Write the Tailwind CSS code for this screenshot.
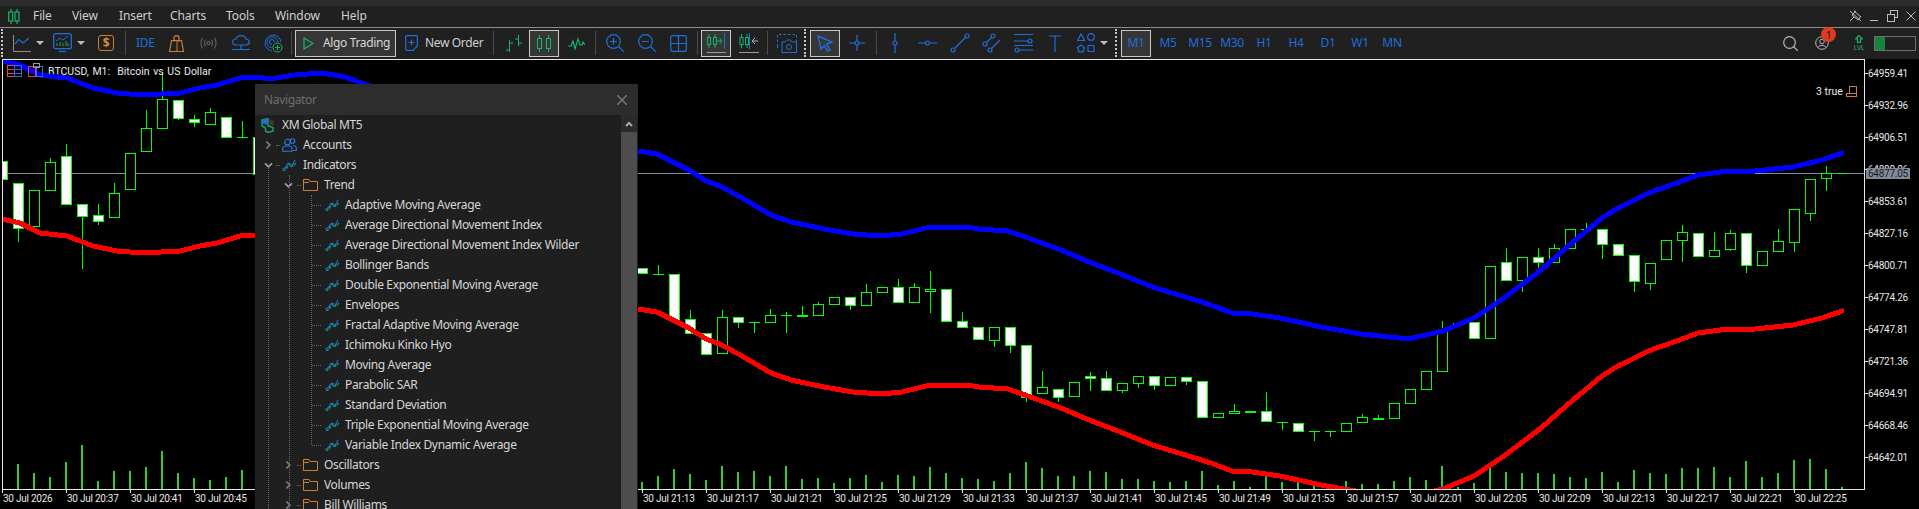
<!DOCTYPE html>
<html lang="en">
<head>
  <meta charset="UTF-8" />
  <title>XM Global MT5 - BTCUSD, M1</title>
  <script src="https://cdn.jsdelivr.net/npm/@tailwindcss/browser@4"></script>
</head>
<body class="bg-black h-[509px] overflow-hidden relative font-['Noto_Sans',sans-serif] text-[12px] leading-none tracking-[-0.35px]">
  <!-- shared icons -->
  <svg class="hidden">
    <symbol id="ind" viewBox="0 0 14 12">
      <path d="M0 10 Q3 10 5 6 T8 6 T13 1" fill="none" stroke="#1e6fd9" stroke-width="1.2" />
      <path d="M1 12 Q4 11 6 7 T9 6 T14 4" fill="none" stroke="#12a36a" stroke-width="1.2" stroke-dasharray="3 1" />
    </symbol>
    <symbol id="folder" viewBox="0 0 15 12">
      <path d="M.5 11.5V.5H6L7 2.5H14.5V11.5ZM.5 3.5H6" fill="none" stroke="#c98232" />
    </symbol>
    <symbol id="chev-right" viewBox="0 0 8 10">
      <path d="M1.5 1 5.5 5 1.5 9" fill="none" stroke="#7d7d7d" stroke-width="2" />
    </symbol>
    <symbol id="chev-down" viewBox="0 0 10 8">
      <path d="M1 1.5 5 5.5 9 1.5" fill="none" stroke="#a0a0a0" stroke-width="2" />
    </symbol>
  </svg>

  <!-- title strip -->
  <div class="h-[6px] bg-[#2b2b2b]"></div>

  <!-- menu bar -->
  <div class="h-[21px] bg-[#202020] flex items-center text-[#cfcfcf] relative tracking-[-0.1px] pb-px">
    <svg class="ml-[8px] w-[12px] h-[15px] flex-none" viewBox="0 0 12 15" fill="none" stroke="#12b76a" stroke-width="1.2">
      <path d="M3 0V15M9 0V15" /><rect x=".7" y="3" width="4" height="9" fill="#202020" /><rect x="7" y="3" width="4" height="9" fill="#202020" />
    </svg>
    <span class="ml-[13px] w-[39px] flex-none">File</span>
    <span class="w-[47px] flex-none">View</span>
    <span class="w-[51px] flex-none">Insert</span>
    <span class="w-[56px] flex-none">Charts</span>
    <span class="w-[49px] flex-none">Tools</span>
    <span class="w-[66px] flex-none">Window</span>
    <span class="flex-none">Help</span>
    <div class="ml-auto flex items-center pr-[3px]">
      <svg class="w-[13px] h-[12px]" viewBox="0 0 13 12" fill="none" stroke="#bdbdbd"><path d="M5 1 12 7M7 1 3 5 9 10 12 6M5 7 1 11M1 1 12 11" /></svg>
      <svg class="ml-[8px] w-[8px] h-[12px]" viewBox="0 0 8 12" fill="none" stroke="#bdbdbd"><path d="M0 10.5H8" /></svg>
      <svg class="ml-[9px] w-[11px] h-[12px]" viewBox="0 0 11 12" fill="none" stroke="#bdbdbd"><rect x="3.5" y=".5" width="7" height="7" /><rect x=".5" y="4.5" width="7" height="7" fill="#202020" /></svg>
      <svg class="ml-[8px] w-[10px] h-[12px]" viewBox="0 0 10 12" fill="none" stroke="#bdbdbd"><path d="M.5 1.5 9.5 10.5M9.5 1.5 .5 10.5" /></svg>
    </div>
  </div>
  <div class="h-px bg-[#8c8c8c]"></div>

  <!-- toolbar -->
  <div class="h-[31px] bg-[#202020] flex items-start pt-px">
    <div class="ml-[1px] w-[2px] h-[28px] flex-none border-l-2 border-dotted border-[#c8c8c8]"></div>
    <div class="h-[28px] flex items-center text-[#1e6fd9] flex-none">
      <svg class="ml-[10px] w-[18px] h-[18px] flex-none" viewBox="0 0 18 18" fill="none"><path d="M.5 1V17.5H18" stroke="#8e8e8e" /><path d="M2 10 6 5.5 10 9 16 4" stroke="#1e6fd9" stroke-width="1.2" /></svg>
      <div class="ml-[5px] w-0 h-0 border-x-[4px] border-x-transparent border-t-[4px] border-t-[#bdbdbd]"></div>
      <svg class="ml-[9px] w-[19px] h-[20px] flex-none" viewBox="0 0 19 20" fill="none"><rect x=".7" y=".7" width="17.6" height="15" rx="2" stroke="#1e6fd9" stroke-width="1.3" /><path d="M6 18.5H13" stroke="#1e6fd9" stroke-width="1.3" /><path d="M3 8 7 5 10 7 15 3" stroke="#1e6fd9" /><path d="M4 13V10M7 13V9M10 13V10M13 13V8M15 13V10" stroke="#12a36a" /></svg>
      <div class="ml-[5px] w-0 h-0 border-x-[4px] border-x-transparent border-t-[4px] border-t-[#bdbdbd]"></div>
      <div class="ml-[13px] w-[16px] h-[16px] flex-none rounded-[3px] border border-[#c98232] text-[#d98a30] font-bold text-[12px] flex items-center justify-center">$</div>
      <div class="ml-[11px] w-px h-[24px] flex-none bg-[#4a4a4a]"></div>
      <span class="ml-[10px] w-[18px] flex-none text-[12px]">IDE</span>
      <svg class="ml-[15px] w-[15px] h-[17px] flex-none" viewBox="0 0 15 17" fill="none" stroke="#c98232"><path d="M2.5 5.5H12.5L14.5 16.5H.5ZM5 7V3Q5 .7 7.5 .7T10 3V7" stroke-width="1.2" /><path d="M8 6V16" /></svg>
      <svg class="ml-[16px] w-[17px] h-[12px] flex-none" viewBox="0 0 17 12" fill="none" stroke="#5e5e5e" stroke-width="1.2"><circle cx="8.5" cy="6" r="1.6" /><path d="M5.5 2.5Q3.5 6 5.5 9.5M11.5 2.5Q13.5 6 11.5 9.5M2.5 .5Q-.5 6 2.5 11.5M14.5 .5Q17.5 6 14.5 11.5" /></svg>
      <svg class="ml-[15px] w-[18px] h-[16px] flex-none" viewBox="0 0 18 16" fill="none" stroke="#1e6fd9" stroke-width="1.2"><path d="M5 10H4Q.7 10 .7 7T4 4Q5 .7 9 .7T14 4Q17.3 4.500 17.3 7T14 10H5ZM9 10V14M0 14.500H18" /></svg>
      <svg class="ml-[14px] w-[19px] h-[19px] flex-none" viewBox="0 0 19 19" fill="none"><path d="M8 17A8 8 0 1 1 17 8M8 14A5.500 5.500 0 1 1 14 8M8 10.500A2.500 2.500 0 1 1 10.500 8" stroke="#1e6fd9" /><circle cx="13.500" cy="13.500" r="4.500" fill="#202020" stroke="#12b76a" /><path d="M13.500 11V16M11 13.500H16" stroke="#12b76a" /></svg>
      <div class="ml-[8px] w-px h-[24px] flex-none bg-[#4a4a4a]"></div>
      <div class="ml-[3px] w-[101px] h-[27px] flex-none flex items-center bg-[#363636] border border-[#c8c8c8] text-[#d8d8d8]">
        <svg class="ml-[7px] w-[11px] h-[13px] flex-none" viewBox="0 0 11 13" fill="none" stroke="#12b76a" stroke-width="1.2"><path d="M1 1V12L10 6.500Z" /></svg>
        <span class="ml-[9px]">Algo Trading</span>
      </div>
      <svg class="ml-[9px] w-[13px] h-[16px] flex-none" viewBox="0 0 13 16" fill="none" stroke="#1e6fd9" stroke-width="1.2"><path d="M1.500 .7H11.500Q12.300 .7 12.300 1.500V11L8 15.300H1.500Q.7 15.300 .7 14.500V1.500Q.7 .7 1.500 .7ZM6.500 4.500V10.500M3.500 7.500H9.500" /></svg>
      <span class="ml-[7px] w-[57px] flex-none whitespace-nowrap text-[#d0d0d0]">New Order</span>
      <div class="ml-[11px] w-px h-[24px] flex-none bg-[#4a4a4a]"></div>
      <svg class="ml-[10px] w-[19px] h-[17px] flex-none" viewBox="0 0 19 17" fill="none" stroke="#12b76a"><path d="M5.500 5V17M2 15H5.500M5.500 8H9M14.500 0V11M11 4H14.500M14.500 8H18" /></svg>
      <div class="ml-[6px] w-[30px] h-[27px] flex-none flex items-center justify-center bg-[#363636] border border-[#c8c8c8]">
        <svg class="w-[14px] h-[17px]" viewBox="0 0 14 17" fill="none" stroke="#12b76a"><path d="M2.500 0V17M11.500 0V17" /><rect x=".5" y="3.500" width="4" height="10" fill="#363636" /><rect x="9.500" y="3.500" width="4" height="10" fill="#363636" /></svg>
      </div>
      <svg class="ml-[9px] w-[17px] h-[13px] flex-none" viewBox="0 0 17 13" fill="none" stroke="#12b76a" stroke-width="1.2"><path d="M0 9H3L5 4 7 12 10 2 12 8H14L15 5 17 8" /></svg>
      <div class="ml-[10px] w-px h-[24px] flex-none bg-[#4a4a4a]"></div>
      <svg class="ml-[10px] w-[18px] h-[18px] flex-none" viewBox="0 0 18 18" fill="none" stroke="#1e6fd9" stroke-width="1.2"><circle cx="7.500" cy="7.500" r="6.800" /><path d="M12.500 12.500 18 18M4 7.500H11M7.500 4V11" /></svg>
      <svg class="ml-[14px] w-[18px] h-[18px] flex-none" viewBox="0 0 18 18" fill="none" stroke="#1e6fd9" stroke-width="1.2"><circle cx="7.500" cy="7.500" r="6.800" /><path d="M12.500 12.500 18 18M4 7.500H11" /></svg>
      <svg class="ml-[14px] w-[17px] h-[17px] flex-none" viewBox="0 0 17 17" fill="none" stroke="#1e6fd9" stroke-width="1.2"><rect x=".7" y=".7" width="15.600" height="15.600" rx="2" /><path d="M8.500 1V16M1 8.500H16" /></svg>
      <div class="ml-[10px] w-px h-[24px] flex-none bg-[#4a4a4a]"></div>
      <div class="ml-[3px] w-[30px] h-[27px] flex-none flex items-center justify-center bg-[#363636] border border-[#c8c8c8]">
        <svg class="w-[20px] h-[20px]" viewBox="0 0 20 20" fill="none"><path d="M3 1V15M9 1V15" stroke="#12b76a" /><rect x="1.500" y="4.500" width="3" height="7" fill="#363636" stroke="#12b76a" /><rect x="7.500" y="4.500" width="3" height="7" fill="#363636" stroke="#12b76a" /><path d="M11 8H16M13.500 5 16 8 13.500 11" stroke="#12b76a" /><path d="M18.500 0V16" stroke="#1e6fd9" /><path d="M1 19.500H20" stroke="#9a9a9a" /></svg>
      </div>
      <svg class="ml-[8px] w-[20px] h-[20px] flex-none" viewBox="0 0 20 20" fill="none"><path d="M2.500 1V15M8 1V15" stroke="#12b76a" /><rect x="1" y="4.500" width="3" height="7" fill="#202020" stroke="#12b76a" /><rect x="6.500" y="4.500" width="3" height="7" fill="#202020" stroke="#12b76a" /><path d="M10.500 0V16" stroke="#1e6fd9" /><path d="M19 8H13M16 5 13 8 16 11" stroke="#9fb7d8" /><path d="M0 19.500H20" stroke="#9a9a9a" /></svg>
      <div class="ml-[8px] w-px h-[24px] flex-none bg-[#4a4a4a]"></div>
      <svg class="ml-[9px] w-[20px] h-[19px] flex-none" viewBox="0 0 20 19" fill="none" stroke="#1e6fd9"><path d="M.5 8V.5H19.500V8" stroke-dasharray="2.500 2" /><path d="M5 18.500V8H8L10 6H13L15 8H19.500V18.500ZM.5 10V14" /><circle cx="12" cy="13" r="2.500" /></svg>
      <div class="ml-[7px] w-[2px] h-[28px] flex-none border-l-2 border-dotted border-[#c8c8c8]"></div>
      <div class="ml-[4px] w-[30px] h-[27px] flex-none flex items-center justify-center bg-[#363636] border border-[#c8c8c8]">
        <svg class="w-[16px] h-[17px]" viewBox="0 0 16 17" fill="none" stroke="#1e6fd9" stroke-width="1.400"><path d="M1 1 15 7 9.500 9 13 15 10.500 16 7.500 10.500 4 14Z" /></svg>
      </div>
      <svg class="ml-[9px] w-[16px] h-[16px] flex-none" viewBox="0 0 16 16" fill="none" stroke="#1e6fd9" stroke-width="1.200"><circle cx="8" cy="8" r="2" /><path d="M8 0V6M8 10V16M0 8H6M10 8H16" /></svg>
      <div class="ml-[11px] w-px h-[24px] flex-none bg-[#4a4a4a]"></div>
      <svg class="ml-[13px] w-[10px] h-[20px] flex-none" viewBox="0 0 10 20" fill="none" stroke="#1e6fd9" stroke-width="1.200"><circle cx="5" cy="10" r="2" /><path d="M5 0V8M5 12V20" /></svg>
      <svg class="ml-[18px] w-[19px] h-[10px] flex-none" viewBox="0 0 19 10" fill="none" stroke="#1e6fd9" stroke-width="1.200"><circle cx="9.500" cy="5" r="2" /><path d="M0 5H7.500M11.500 5H19" /></svg>
      <svg class="ml-[13px] w-[20px] h-[20px] flex-none" viewBox="0 0 20 20" fill="none" stroke="#1e6fd9" stroke-width="1.200"><circle cx="3" cy="17" r="2" /><circle cx="17" cy="3" r="2" /><path d="M4.500 15.500 15.500 4.500" /></svg>
      <svg class="ml-[12px] w-[19px] h-[20px] flex-none" viewBox="0 0 19 20" fill="none" stroke="#1e6fd9" stroke-width="1.200"><circle cx="3" cy="11" r="2" /><circle cx="11" cy="3" r="2" /><circle cx="8" cy="17" r="2" /><path d="M4.500 9.500 9.500 4.500M9.500 15.500 18 7" /></svg>
      <svg class="ml-[13px] w-[19px] h-[20px] flex-none" viewBox="0 0 19 20" fill="none" stroke="#1e6fd9" stroke-width="1.200"><circle cx="16" cy="8" r="2" /><circle cx="3" cy="17" r="2" /><path d="M0 1.500H19M0 8H14M0 12.500H19M5 17H19" /></svg>
      <svg class="ml-[16px] w-[12px] h-[17px] flex-none" viewBox="0 0 12 17" fill="none" stroke="#1e6fd9" stroke-width="1.200"><path d="M0 1H12M6 1V17" /></svg>
      <svg class="ml-[16px] w-[18px] h-[20px] flex-none" viewBox="0 0 18 20" fill="none" stroke="#1e6fd9" stroke-width="1.200"><path d="M4 1 7.500 7.500H.5Z" /><circle cx="14" cy="4" r="3.300" /><path d="M4 12 7.500 14.500 6 18.800H2L.5 14.500Z" /><rect x="11" y="12.500" width="6" height="6" rx=".5" /></svg>
      <div class="ml-[5px] w-0 h-0 border-x-[4px] border-x-transparent border-t-[4px] border-t-[#bdbdbd]"></div>
      <div class="ml-[7px] w-[2px] h-[28px] flex-none border-l-2 border-dotted border-[#c8c8c8]"></div>
      <div class="ml-[4px] w-[30px] h-[27px] flex-none flex items-center justify-center bg-[#363636] border border-[#c8c8c8]">M1</div>
      <span class="ml-px w-[32px] flex-none text-center">M5</span>
      <span class="w-[32px] flex-none text-center">M15</span>
      <span class="w-[32px] flex-none text-center">M30</span>
      <span class="w-[32px] flex-none text-center">H1</span>
      <span class="w-[32px] flex-none text-center">H4</span>
      <span class="w-[32px] flex-none text-center">D1</span>
      <span class="w-[32px] flex-none text-center">W1</span>
      <span class="w-[32px] flex-none text-center">MN</span>
      <svg class="ml-[375px] w-[15px] h-[15px] flex-none" viewBox="0 0 15 15" fill="none" stroke="#b5b5b5" stroke-width="1.200"><circle cx="6.500" cy="6.500" r="5.800" /><path d="M10.500 10.500 15 15" /></svg>
      <div class="ml-[17px] w-[14px] h-[14px] flex-none relative">
        <svg class="w-[14px] h-[14px]" viewBox="0 0 14 14" fill="none" stroke="#b5b5b5"><circle cx="7" cy="7" r="6.300" /><circle cx="7" cy="5.500" r="2.300" /><path d="M2.500 11.500Q7 7 11.500 11.500" /></svg>
        <span class="absolute left-[6px] top-[-9px] w-[15px] h-[15px] rounded-full bg-[#e23a1e] text-[#202020] text-[11px] flex items-center justify-center">1</span>
      </div>
      <div class="ml-[24px] w-[12px] h-[16px] flex-none flex flex-col items-center text-[#12b76a]">
        <svg class="w-[8px] h-[8px]" viewBox="0 0 8 8" fill="none" stroke="#12b76a" stroke-width="1.200"><path d="M4 .5 .5 4H2.500V7.500H5.500V4H7.500Z" /></svg>
        <span class="text-[7px] mt-px">LVL</span>
      </div>
      <div class="ml-[9px] w-[42px] h-[15px] flex-none border border-[#6e6e6e] flex">
        <div class="w-[10px] bg-[#16843c]"></div>
      </div>
    </div>
  </div>

  <!-- chart -->
  <svg id="chart" class="block absolute left-0 top-[59px] w-[1919px] h-[450px] tracking-normal" viewBox="0 59 1919 450" font-family="Roboto, sans-serif" font-size="10">
    <defs><clipPath id="plot"><rect x="3" y="60" width="1861" height="429" /></clipPath></defs>
    <rect x="0" y="59" width="1919" height="450" fill="#000" />
    <g id="axes" shape-rendering="crispEdges"></g>
    <g id="candles" shape-rendering="crispEdges" clip-path="url(#plot)"></g>
    <text x="48" y="74.500" font-size="10.500" fill="#e8e8e8" word-spacing="1">BTCUSD, M1:&#160; Bitcoin vs US Dollar</text>
    <g clip-path="url(#plot)" shape-rendering="crispEdges">
      <polyline id="upper" fill="none" stroke="#0000ff" stroke-width="5" stroke-linecap="round" />
      <polyline id="lower" fill="none" stroke="#ff0000" stroke-width="5" stroke-linecap="round" />
    </g>
    <g id="labels" fill="#e8e8e8"></g>
    <g id="tag"></g>
    <!-- chart corner widgets -->
    <g fill="none" shape-rendering="crispEdges">
      <path d="M7.500 65.500H14.500V76.500H7.500ZM8 69H14M8 73H14" stroke="#d84a42" /><path d="M14.500 65.500H21.500V76.500H14.500ZM15 69H21M15 73H21" stroke="#2a70d0" />
      <path d="M28.500 66.500H35.500V76.500H28.500Z" stroke="#d84a42" /><path d="M36.500 66.500H42.500V76.500H36.500Z" stroke="#2a70d0" /><path d="M33.500 63.500H39.500V67.500H33.500Z" stroke="#9a9a9a" />
      <path d="M1849.500 86.500H1856.500V96.500H1846.500V93.500H1849.500ZM1849.500 93.500H1856.500" stroke="#c98232" />
    </g>
    <text x="1816" y="95" fill="#e8e8e8" font-size="10.500">3 true</text>
  </svg>

  <!-- floating navigator window -->
  <div class="absolute left-[255px] top-[84px] w-[383px] h-[425px] bg-[#1f1f1f] overflow-hidden text-[#d6d6d6]">
    <div class="h-[31px] bg-[#2d2d2d] flex items-center justify-between pl-[9px] pr-[11px] text-[#6f6f6f]">
      <span>Navigator</span>
      <svg class="w-[10px] h-[10px]" viewBox="0 0 10 10" fill="none" stroke="#7a7a7a" stroke-width="1.300"><path d="M0 0 10 10M10 0 0 10" /></svg>
    </div>
    <div class="absolute right-px top-[31px] bottom-0 w-[16px] bg-[#2a2a2a]">
      <div class="h-[17px] flex items-center justify-center">
        <svg class="w-[8px] h-[6px]" viewBox="0 0 8 6" fill="none" stroke="#a8a8a8" stroke-width="2"><path d="M1 5 4 2 7 5" /></svg>
      </div>
      <div class="absolute left-0 right-0 top-[17px] bottom-0 bg-[#4d4d4d]"></div>
    </div>

    <!-- tree guides -->
    <div class="absolute left-[13px] top-[84px] bottom-0 border-l border-dotted border-[#666]"></div>
    <div class="absolute left-[34px] top-[91px] bottom-0 border-l border-dotted border-[#666]"></div>
    <div class="absolute left-[56px] top-[111px] h-[250px] border-l border-dotted border-[#666]"></div>

    <div class="h-[20px] flex items-center">
      <svg class="ml-[6px] w-[14px] h-[15px] flex-none" viewBox="0 0 14 15" fill="none"><path d="M1 2 7 .5V8L12 9.500V13L7 14.500 4.500 13V10L1 8Z" stroke="#12a36a" stroke-width="1.500" /><path d="M1 2 7 .5V7L1 5Z" fill="#1e6fd9" /><path d="M8 1 13 3V7L9 8Z" fill="#4a3322" /></svg>
      <span class="ml-[7px]">XM Global MT5</span>
    </div>
    <div class="h-[20px] flex items-center">
      <svg class="ml-[10px] w-[7px] h-[10px] flex-none"><use href="#chev-right" /></svg>
      <div class="ml-[4px] w-[4px] border-t border-dotted border-[#666]"></div>
      <svg class="ml-[2px] w-[15px] h-[14px] flex-none" viewBox="0 0 15 14" fill="none" stroke="#2a78e0" stroke-width="1.100"><circle cx="5.500" cy="4" r="2.800" /><circle cx="10.500" cy="3" r="2.300" /><path d="M.7 13.300V11Q.7 8 4 8H7Q10 8 10 11V13.300ZM11 7.500Q14.300 7.500 14.300 10.500V12.500H11" /></svg>
      <span class="ml-[6px]">Accounts</span>
    </div>
    <div class="h-[20px] flex items-center">
      <svg class="ml-[9px] w-[9px] h-[7px] flex-none"><use href="#chev-down" /></svg>
      <div class="ml-[3px] w-[4px] border-t border-dotted border-[#666]"></div>
      <svg class="ml-[2px] w-[14px] h-[12px] flex-none"><use href="#ind" /></svg>
      <span class="ml-[7px]">Indicators</span>
    </div>
    <div class="h-[20px] flex items-center">
      <svg class="ml-[29px] w-[9px] h-[7px] flex-none"><use href="#chev-down" /></svg>
      <div class="ml-[4px] w-[4px] border-t border-dotted border-[#666]"></div>
      <svg class="ml-[2px] w-[15px] h-[12px] flex-none"><use href="#folder" /></svg>
      <span class="ml-[6px]">Trend</span>
    </div>
    <div id="trend-list"></div>
    <div class="h-[20px] flex items-center">
      <svg class="ml-[30px] w-[7px] h-[10px] flex-none"><use href="#chev-right" /></svg>
      <div class="ml-[5px] w-[4px] border-t border-dotted border-[#666]"></div>
      <svg class="ml-[2px] w-[15px] h-[12px] flex-none"><use href="#folder" /></svg>
      <span class="ml-[6px]">Oscillators</span>
    </div>
    <div class="h-[20px] flex items-center">
      <svg class="ml-[30px] w-[7px] h-[10px] flex-none"><use href="#chev-right" /></svg>
      <div class="ml-[5px] w-[4px] border-t border-dotted border-[#666]"></div>
      <svg class="ml-[2px] w-[15px] h-[12px] flex-none"><use href="#folder" /></svg>
      <span class="ml-[6px]">Volumes</span>
    </div>
    <div class="h-[20px] flex items-center">
      <svg class="ml-[30px] w-[7px] h-[10px] flex-none"><use href="#chev-right" /></svg>
      <div class="ml-[5px] w-[4px] border-t border-dotted border-[#666]"></div>
      <svg class="ml-[2px] w-[15px] h-[12px] flex-none"><use href="#folder" /></svg>
      <span class="ml-[6px]">Bill Williams</span>
    </div>
  </div>

  <script>
    const NS = 'http://www.w3.org/2000/svg';
    const add = (parent, tag, attrs, text) => {
      const el = document.createElementNS(NS, tag);
      for (const k in attrs) el.setAttribute(k, attrs[k]);
      if (text) el.textContent = text;
      document.getElementById(parent).appendChild(el);
    };

    // navigator rows
    const trend = ['Adaptive Moving Average', 'Average Directional Movement Index', 'Average Directional Movement Index Wilder',
      'Bollinger Bands', 'Double Exponential Moving Average', 'Envelopes', 'Fractal Adaptive Moving Average', 'Ichimoku Kinko Hyo',
      'Moving Average', 'Parabolic SAR', 'Standard Deviation', 'Triple Exponential Moving Average', 'Variable Index Dynamic Average'];
    document.getElementById('trend-list').innerHTML = trend.map(name => `
      <div class="h-[20px] flex items-center">
        <div class="ml-[57px] w-[9px] border-t border-dotted border-[#666]"></div>
        <svg class="ml-[4px] w-[14px] h-[12px] flex-none"><use href="#ind" /></svg>
        <span class="ml-[6px] whitespace-nowrap">${name}</span>
      </div>`).join('');

    // candle x = 2 + 16 * k. [k, type, bodyTop, bodyBottom, wickTop, wickBottom]
    const candles = [
      [0,'w',161,179],[1,'w',183,228,0,242],[2,'h',190,226],[3,'h',162,190,158],[4,'w',156,204,144],[5,'w',204,216,0,269],
      [6,'w',215,221,204,225],[7,'h',193,217,183],[8,'h',153,189],[9,'h',128,151,110],[10,'h',99,128,72],[11,'w',100,118,0,120],
      [12,'w',119,122,115,127],[13,'h',112,124,108],[14,'w',117,137],[15,'d',137,137,121],[16,'w',137,174],
      [40,'w',268,273],[41,'d',274,274,265],[42,'w',274,320],[43,'w',319,333,310],[44,'w',333,354],[45,'h',317,353,310],
      [46,'w',317,322,0,328],[47,'d',322,322,322,333],[48,'h',315,322,309],[49,'d',315,315,312,333],[50,'d',315,316,306],
      [51,'h',304,315,302],[52,'h',297,304],[53,'w',297,305,0,310],[54,'h',292,305,284],[55,'h',287,292],[56,'w',287,302,279],
      [57,'h',287,302,283],[58,'h',289,291,271,313],[59,'w',289,321],[60,'w',321,327,312],[61,'w',327,339],[62,'h',327,340,0,347],
      [63,'w',327,345,0,353],[64,'w',345,397,0,402],[65,'h',387,393,371],[66,'w',389,397,0,402],[67,'h',382,396],
      [68,'w',376,378,372,391],[69,'w',378,390,371],[70,'h',383,390,0,393],[71,'h',376,383,0,388],[72,'w',376,385,0,390],
      [73,'h',377,385],[74,'w',377,381,0,385],[75,'w',381,417],[76,'h',413,417],[77,'h',411,413,404],[78,'d',411,412],
      [79,'w',411,421,392],[80,'d',422,422,0,430],[81,'w',423,431],[82,'d',431,431,0,441],[83,'d',431,431,0,437],[84,'h',423,431],
      [85,'h',417,422,414],[86,'d',418,419,415],[87,'h',403,418],[88,'h',389,403],[89,'h',371,389],[90,'h',331,371,321],
      [91,'d',323,323,322],[92,'w',322,338],[93,'h',266,338],[94,'w',262,280,248],[95,'h',257,280,0,292],[96,'w',257,262,248,268],
      [97,'h',248,262,244],[98,'h',229,248],[99,'d',229,229,223],[100,'w',229,244,0,259],[101,'w',244,255],[102,'w',255,281,0,292],
      [103,'h',263,283,0,290],[104,'h',240,259],[105,'h',232,240,225,262],[106,'w',233,256],[107,'h',250,256,232],
      [108,'h',233,249,230,251],[109,'w',233,265,0,273],[110,'h',251,265],[111,'h',241,251,229],[112,'h',209,242,0,252],
      [113,'h',179,213,0,221],[114,'h',173,178,166,191],[115,'d',173,173]
    ];
    // volume bar tops, base at y = 489
    const volumes = {
      1:464,2:473,3:477,4:462,5:445,6:481,7:471,8:471,9:467,10:451,11:473,12:478,13:480,14:477,15:470,
      40:482,41:476,42:469,43:474,44:480,45:466,46:472,47:471,48:476,49:466,50:479,51:478,52:483,53:478,54:475,55:482,56:475,57:476,
      58:467,59:473,60:478,61:479,62:481,63:473,64:462,65:468,66:476,67:476,68:471,69:472,70:479,71:479,72:481,73:482,74:481,75:471,
      76:485,77:481,78:487,79:476,80:482,81:480,82:485,83:487,84:481,85:484,86:484,87:481,88:477,89:480,90:466,91:487,92:483,93:467,
      94:472,95:473,96:473,97:474,98:477,99:478,100:472,101:482,102:470,103:473,104:474,105:468,106:468,107:467,108:477,109:461,
      110:477,111:473,112:460,113:459,114:469,115:487
    };
    const LIME = '#00ff00', AXIS = '#e8e8e8';

    // current price line goes under the candles
    add('axes', 'rect', { x: 3, y: 173, width: 1861, height: 1, fill: '#7f8b99' });
    for (const k in volumes) {
      const x = 2 + 16 * k - 1;
      add('candles', 'rect', { x, y: volumes[k], width: 2, height: 489 - volumes[k], fill: '#32cd32' });
    }
    for (const [k, type, top, bot, wt, wb] of candles) {
      const c = 2 + 16 * k;
      if (wt) add('candles', 'rect', { x: c, y: wt, width: 1, height: top - wt, fill: LIME });
      if (wb) add('candles', 'rect', { x: c, y: bot, width: 1, height: wb - bot, fill: LIME });
      if (type === 'd') add('candles', 'rect', { x: c - 5, y: top, width: 11, height: bot - top + 1, fill: LIME });
      else add('candles', 'rect', { x: c - 4.5, y: top + 0.5, width: 10, height: bot - top, fill: type === 'w' ? '#fff' : '#000', stroke: LIME });
    }

    // envelope bands, the lower one is the upper shifted by 158px
    const band = [[2,61],[20,65],[40,75],[67,78],[93,88],[117,93],[143,95],[180,93],[200,88],[217,85],[240,78],[258,77],[269,79],[295,75],[322,73],[345,77],[367,85],
      [400,95],[500,130],[560,143],[638,151],[657,154],[673,162],[689,170],[706,181],[722,187],[742,198],[771,215],[791,222],[824,229],[853,234],[881,236],[902,234],
      [930,227],[967,227],[979,229],[1008,231],[1028,238],[1061,250],[1089,262],[1118,273],[1155,288],[1179,295],[1211,305],[1232,313],[1252,314],[1280,318],
      [1321,327],[1361,334],[1408,339],[1443,331],[1474,318],[1504,298],[1541,270],[1573,242],[1602,218],[1618,208],[1651,192],[1671,185],[1698,175],[1728,171],
      [1755,171],[1793,167],[1822,160],[1842,153]];
    document.getElementById('upper').setAttribute('points', band.map(p => p.join(',')).join(' '));
    document.getElementById('lower').setAttribute('points', band.map(([x, y]) => x + ',' + (y + 158)).join(' '));

    // frame
    add('axes', 'rect', { x: 2, y: 59, width: 1863, height: 1, fill: AXIS });
    add('axes', 'rect', { x: 2, y: 59, width: 1, height: 431, fill: AXIS });
    add('axes', 'rect', { x: 1864, y: 59, width: 1, height: 431, fill: AXIS });
    add('axes', 'rect', { x: 2, y: 489, width: 1863, height: 1, fill: AXIS });

    // price scale
    for (let i = 0; i < 13; i++) {
      const y = 73 + 32 * i;
      add('axes', 'rect', { x: 1865, y, width: 3, height: 1, fill: AXIS });
      add('labels', 'text', { x: 1868, y: y + 4, 'letter-spacing': '-0.25' }, (64959.41 - 26.45 * i).toFixed(2));
    }
    add('tag', 'rect', { x: 1866, y: 168, width: 44, height: 11, fill: '#7f8b99', 'shape-rendering': 'crispEdges' });
    add('tag', 'text', { x: 1868, y: 177, fill: '#1c1c1c', 'letter-spacing': '-0.25' }, '64877.05');

    // time scale
    const label = (x, text) => {
      add('axes', 'rect', { x, y: 490, width: 1, height: 3, fill: AXIS });
      add('labels', 'text', { x: x + 1, y: 502, 'letter-spacing': '-0.25' }, text);
    };
    label(2, '30 Jul 2026');
    label(66, '30 Jul 20:37');
    label(130, '30 Jul 20:41');
    label(194, '30 Jul 20:45');
    for (let n = 0; n <= 18; n++) {
      const m = 13 + 4 * n, h = 21 + Math.floor(m / 60);
      label(642 + 64 * n, '30 Jul ' + h + ':' + String(m % 60).padStart(2, '0'));
    }
  </script>
</body>
</html>
